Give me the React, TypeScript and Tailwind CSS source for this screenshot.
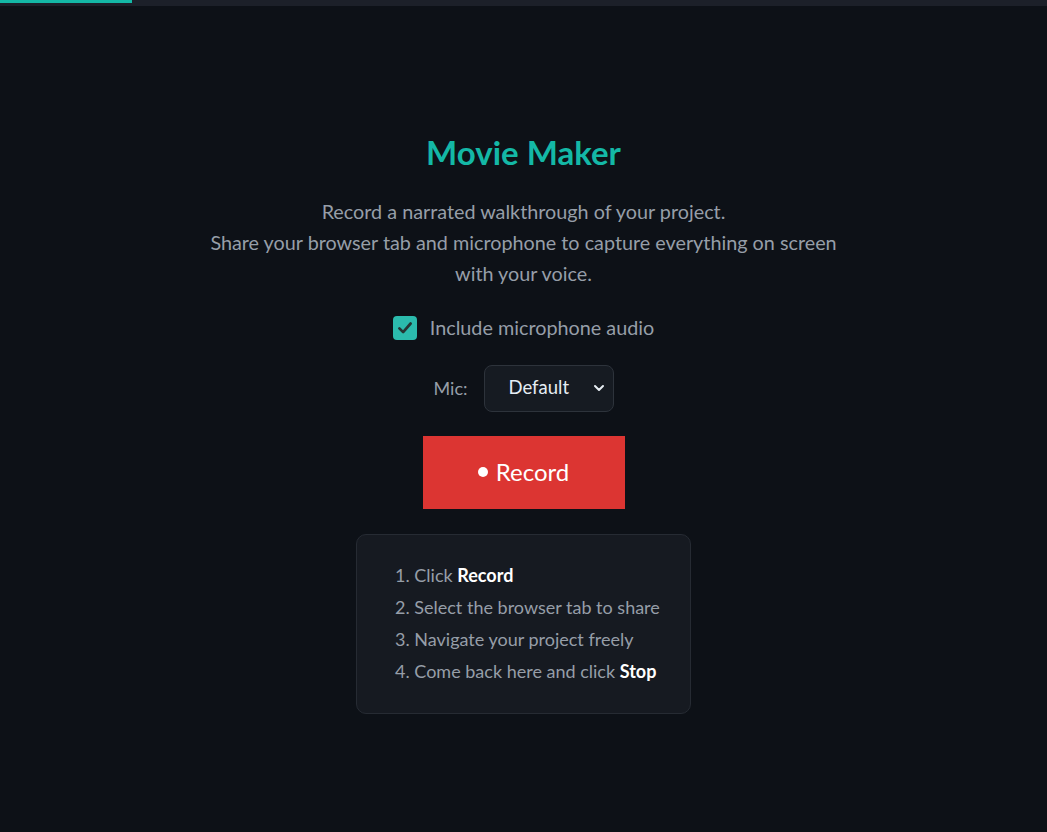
import { useState } from "react";

const steps: { text: string; bold?: string }[] = [
  { text: "Click ", bold: "Record" },
  { text: "Select the browser tab to share" },
  { text: "Navigate your project freely" },
  { text: "Come back here and click ", bold: "Stop" },
];

export default function App() {
  const [mic, setMic] = useState(true);
  const [device, setDevice] = useState("default");

  return (
    <div className="min-h-[832px] bg-[#0d1117] text-[#c9d1d9]" style={{ fontFamily: '"Lato", "Liberation Sans", sans-serif' }}>
      {/* progress strip */}
      <div className="h-[6px] bg-[#1c2029]">
        <div className="h-[3px] w-[132px] bg-[#14b8a6]" />
      </div>

      <main className="flex flex-col items-center pt-[126px]">
        <h1 className="text-[33px] font-bold text-[#14b8a6] leading-[40px]">Movie Maker</h1>

        <p className="mt-[24px] max-w-[640px] text-center text-[19.8px] leading-[31px] text-[#969ea8]">
          Record a narrated walkthrough of your project.
          <br />
          Share your browser tab and microphone to capture everything on screen with your voice.
        </p>

        <label className="mt-[24px] flex items-center gap-[13px] text-[19.8px] text-[#969ea8] cursor-pointer">
          <span
            onClick={() => setMic(!mic)}
            className="flex h-6 w-6 items-center justify-center rounded-[4px] bg-[#2bbbad]"
          >
            {mic && (
              <svg viewBox="0 0 24 24" className="h-[18px] w-[18px]" fill="none" stroke="#263534" strokeWidth="3.6" strokeLinecap="round" strokeLinejoin="round">
                <path d="M4.5 12.5l5 5L19.5 6" />
              </svg>
            )}
          </span>
          Include microphone audio
        </label>

        <div className="mt-[22px] flex items-center gap-4 text-[18px]">
          <span className="text-[#969ea8]">Mic:</span>
          <div className="relative">
            <select
              value={device}
              onChange={(e) => setDevice(e.target.value)}
              className="h-[47px] w-[130px] appearance-none rounded-lg border border-[#2d333b] bg-[#161b22] pl-6 pr-8 text-[18.5px] text-[#e6edf3] outline-none"
            >
              <option value="default">Default</option>
            </select>
            <svg viewBox="0 0 24 24" className="pointer-events-none absolute right-[7px] top-[15px] h-[16px] w-[16px]" fill="none" stroke="#e6edf3" strokeWidth="3" strokeLinecap="round" strokeLinejoin="round">
              <path d="M6 9l6 6 6-6" />
            </svg>
          </div>
        </div>

        <button className="mt-6 flex h-[73px] w-[202px] items-center justify-center gap-2 bg-[#dc3532] text-[24px] text-white">
          <span className="h-[10px] w-[10px] rounded-full bg-white" />
          Record
        </button>

        <div className="mt-[25px] w-[335px] rounded-[10px] border border-[#262b33] bg-[#161a21] pl-[38px] pt-[29px] pb-[31px]">
          <ol className="flex flex-col gap-[10px] text-[18px] leading-[22px] text-[#969ea8]">
            {steps.map((s, i) => (
              <li key={i}>
                {i + 1}. {s.text}
                {s.bold && <b className="font-bold text-white">{s.bold}</b>}
              </li>
            ))}
          </ol>
        </div>
      </main>
    </div>
  );
}
